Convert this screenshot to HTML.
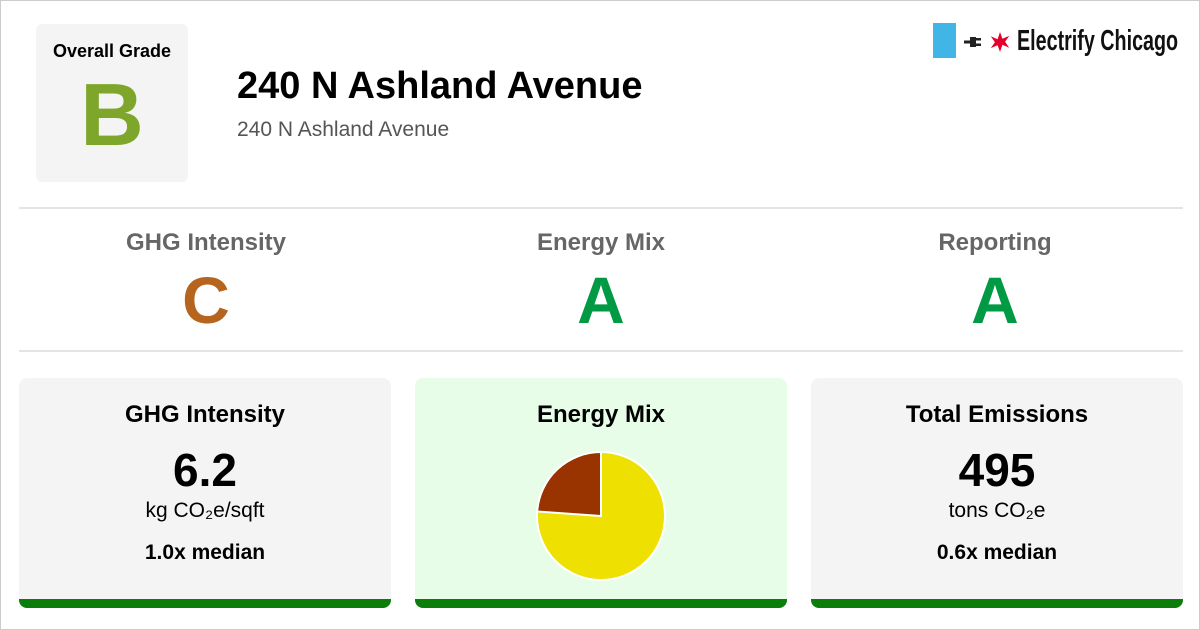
<!DOCTYPE html>
<html><head><style>
*{margin:0;padding:0;box-sizing:border-box}
body{width:1200px;height:630px;background:#fff;font-family:"Liberation Sans",Arial,sans-serif;position:relative;overflow:hidden;border:1px solid #ccc}
.abs{position:absolute}
.grade{left:35px;top:23px;width:152px;height:158px;background:#f4f4f4;border-radius:6px;text-align:center}
.grade .t{font-weight:bold;font-size:18px;margin-top:17px}
.grade .g{font-weight:bold;font-size:88px;color:#7ea62a;line-height:88px;margin-top:9px}
h1{position:absolute;left:236px;top:64px;font-size:38px;font-weight:bold}
.sub{left:236px;top:117px;font-size:21px;color:#555}
.hr{left:18px;width:1164px;height:2px;background:#e4e4e4}
.col{width:394px;text-align:center}
.col .l{font-size:24px;font-weight:bold;color:#666;margin-top:0}
.col .g{font-size:66px;font-weight:bold;line-height:66px;margin-top:10px}
.card{top:377px;width:372px;height:230px;background:#f4f4f4;border-radius:8px;overflow:hidden;text-align:center}
.card .bar{position:absolute;left:0;bottom:0;width:100%;height:9px;background:#0a7d0a}
.card .t{font-size:24px;font-weight:bold;margin-top:23px}
.card .v{font-size:46px;font-weight:bold;margin-top:16px;line-height:50px}
.card .u{font-size:21px;margin-top:4px}
.card .m{font-size:21px;font-weight:bold;margin-top:18px}
</style></head><body>
<div class="abs grade"><div class="t">Overall Grade</div><div class="g">B</div></div>
<h1>240 N Ashland Avenue</h1>
<div class="abs sub">240 N Ashland Avenue</div>
<div class="abs" style="left:932px;top:22px;width:23px;height:35px;background:#41b6e6"></div>
<svg class="abs" style="left:962px;top:30px" width="50" height="22" viewBox="0 0 50 22">
<rect x="1" y="9.5" width="6" height="3" fill="#222"/><path d="M7 6h6v10H7z" fill="#222"/><rect x="13" y="7" width="5" height="2.5" fill="#222"/><rect x="13" y="12.5" width="5" height="2.5" fill="#222"/>
<path d="M37 1l2.4 6.8 6.8-2.9-4.1 5.9 4.1 5.9-6.8-2.9L37 21l-2.4-6.8-6.8 2.9 4.1-5.9-4.1-5.9 6.8 2.9z" fill="#e4002b"/>
</svg>
<div class="abs" style="left:1016px;top:24px;font-size:29px;font-weight:bold;transform:scaleX(0.68);transform-origin:left;color:#111;white-space:nowrap">Electrify Chicago</div>
<div class="abs hr" style="top:206px"></div>
<div class="abs col" style="left:8px;top:228px"><div class="l">GHG Intensity</div><div class="g" style="color:#b5651d">C</div></div>
<div class="abs col" style="left:403px;top:228px"><div class="l">Energy Mix</div><div class="g" style="color:#009a44">A</div></div>
<div class="abs col" style="left:797px;top:228px"><div class="l">Reporting</div><div class="g" style="color:#009a44">A</div></div>
<div class="abs hr" style="top:349px"></div>
<div class="abs card" style="left:18px"><div class="t">GHG Intensity</div><div class="v">6.2</div><div class="u">kg CO₂e/sqft</div><div class="m">1.0x median</div><div class="bar"></div></div>
<div class="abs card" style="left:414px;background:#e8fde8"><div class="t">Energy Mix</div>
<svg class="abs" style="left:120px;top:72px" width="132" height="132" viewBox="0 0 132 132">
<circle cx="66" cy="66" r="64" fill="#eee000" stroke="#fff" stroke-width="2"/>
<path d="M66 66L66 2A64 64 0 0 0 2.2 61.5Z" fill="#993300" stroke="#fff" stroke-width="2"/>
</svg><div class="bar"></div></div>
<div class="abs card" style="left:810px"><div class="t">Total Emissions</div><div class="v">495</div><div class="u">tons CO₂e</div><div class="m">0.6x median</div><div class="bar"></div></div>
</body></html>
